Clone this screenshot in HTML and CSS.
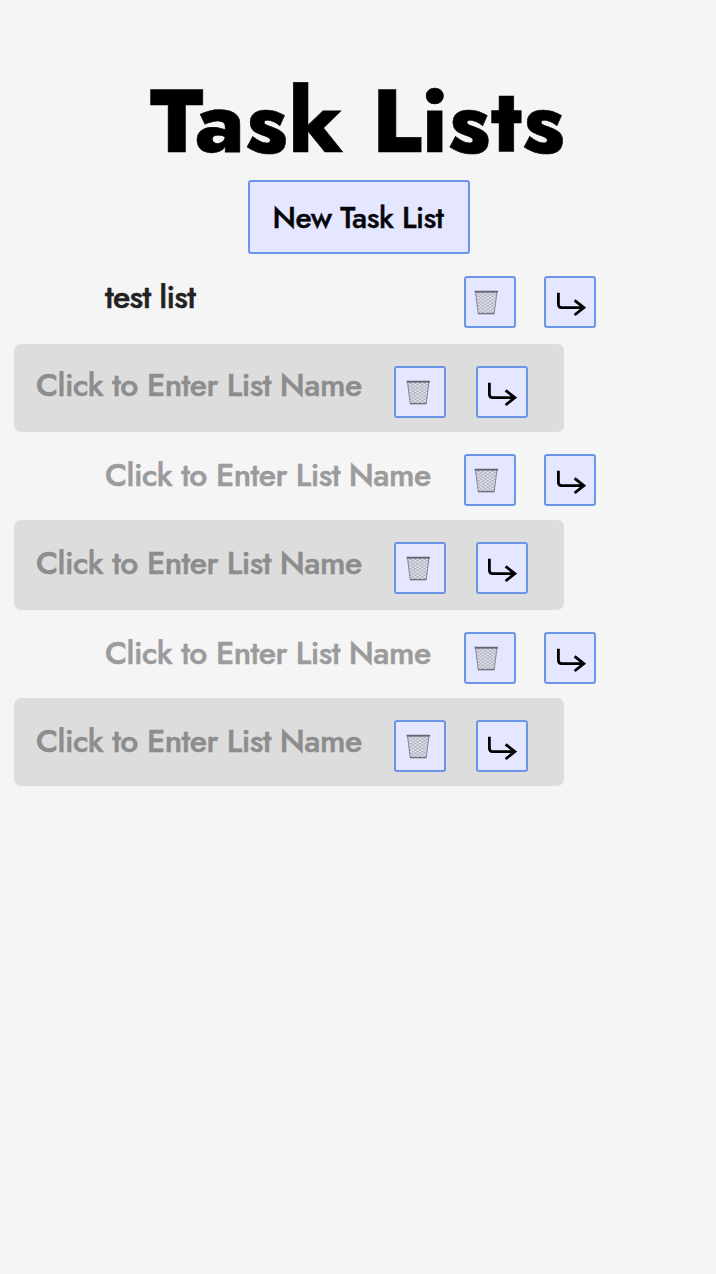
FILE: index.html
```
<!DOCTYPE html>
<html lang="en">
<head>
<meta charset="utf-8">
<title>Task Lists</title>
<link rel="stylesheet" href="styles.css">
</head>
<body>
<svg class="defs" width="0" height="0" aria-hidden="true">
  <defs>
    <pattern id="mesh" width="4.6" height="3.2" patternUnits="userSpaceOnUse">
      <path d="M0 0L4.6 3.2M4.6 0L0 3.2" stroke="#8d909c" stroke-width=".6"/>
    </pattern>
    <symbol id="trash" viewBox="0 0 24 25">
      <path d="M1.5 2H23L20.2 23.5H4.2Z" fill="#e4e7f2"/>
      <path d="M1.5 2H23L20.2 23.5H4.2Z" fill="url(#mesh)" stroke="#858894" stroke-width="1"/>
      <path d="M.6 1.6H24" stroke="#62656f" stroke-width="1.7"/>
      <path d="M4 23.6H20.4" stroke="#72757f" stroke-width="1.5"/>
    </symbol>
    <symbol id="arrow" viewBox="0 0 30 26">
      <path d="M2.4 1.8V13.2Q2.4 16.6 5.6 16.6H28M18.6 9.3L27.8 16.6L18.6 24" fill="none" stroke="#000" stroke-width="2.8"/>
    </symbol>
  </defs>
</svg>
<main class="page">
  <h1 class="title">Task Lists</h1>
  <button class="new-list"><span class="new-label">New Task List</span></button>
  <ul class="lists">
    <li class="row"><span class="name filled">test list</span><button class="action"><svg class="trash"><use href="#trash"/></svg></button><button class="action"><svg class="arrow"><use href="#arrow"/></svg></button></li>
    <li class="row shaded first"><span class="name">Click to Enter List Name</span><button class="action"><svg class="trash"><use href="#trash"/></svg></button><button class="action"><svg class="arrow"><use href="#arrow"/></svg></button></li>
    <li class="row"><span class="name">Click to Enter List Name</span><button class="action"><svg class="trash"><use href="#trash"/></svg></button><button class="action"><svg class="arrow"><use href="#arrow"/></svg></button></li>
    <li class="row shaded tall"><span class="name">Click to Enter List Name</span><button class="action"><svg class="trash"><use href="#trash"/></svg></button><button class="action"><svg class="arrow"><use href="#arrow"/></svg></button></li>
    <li class="row"><span class="name">Click to Enter List Name</span><button class="action"><svg class="trash"><use href="#trash"/></svg></button><button class="action"><svg class="arrow"><use href="#arrow"/></svg></button></li>
    <li class="row shaded"><span class="name">Click to Enter List Name</span><button class="action"><svg class="trash"><use href="#trash"/></svg></button><button class="action"><svg class="arrow"><use href="#arrow"/></svg></button></li>
  </ul>
</main>
</body>
</html>
```
FILE: styles.css
```
* { box-sizing: border-box; }
body {
  margin: 0;
  min-height: 1274px;
  background: #f5f5f5;
  font-family: Futura, Jost, Lato, sans-serif;
}
.defs { position: absolute; }
.page {
  display: flex;
  flex-direction: column;
  align-items: center;
  padding-top: 60px;
}
.title {
  margin: 0;
  height: 120px;
  font-size: 89px;
  line-height: 122px;
  font-weight: 800;
  letter-spacing: 1px;
  -webkit-text-stroke: .6px #000;
  white-space: nowrap;
  color: #000;
}
.new-list {
  display: flex;
  justify-content: center;
  width: 222px;
  height: 74px;
  margin-left: 2px;
  padding: 0 2px 0 0;
  border: 2px solid #6b95e6;
  border-radius: 3px;
  background: #e5e6ff;
  color: #05060a;
  font: 500 30px/72px Futura, Jost, Lato, sans-serif;
  letter-spacing: -0.45px;
  -webkit-text-stroke: .4px #05060a;
  white-space: nowrap;
}
.lists {
  align-self: stretch;
  margin: 0;
  padding: 0;
  list-style: none;
}
.row {
  display: grid;
  grid-template-columns: 331px 52px 52px;
  column-gap: 28px;
  width: 596px;
  height: 90px;
  padding: 22px 0 0 105px;
}
.row:nth-child(3), .row:nth-child(5) { height: 88px; }
.shaded {
  width: 550px;
  height: 88px;
  margin-left: 14px;
  padding-left: 22px;
  grid-template-columns: 328px 52px 52px;
  column-gap: 30px;
  border-radius: 7px;
  background: #ddd;
}
.tall { height: 90px; }
.name {
  color: #9b9b9b;
  font-size: 32px;
  line-height: 42px;
  font-weight: 500;
  letter-spacing: -0.54px;
  -webkit-text-stroke: .5px currentColor;
  white-space: nowrap;
}
.first .name { line-height: 38px; }
.shaded .name { color: #8d8d8d; }
.name.filled { color: #222; letter-spacing: -0.7px; }
.action {
  display: flex;
  width: 52px;
  height: 52px;
  padding: 0;
  border: 2px solid #6b95e6;
  border-radius: 3px;
  background: #e5e6ff;
}
.trash {
  width: 24px;
  height: 25px;
  margin: 12px 0 0 8px;
}
.shaded .trash { margin-left: 10px; }
.arrow {
  width: 30px;
  height: 26px;
  margin: 13px 0 0 10px;
}
.shaded .arrow { margin-left: 9px; }
```
